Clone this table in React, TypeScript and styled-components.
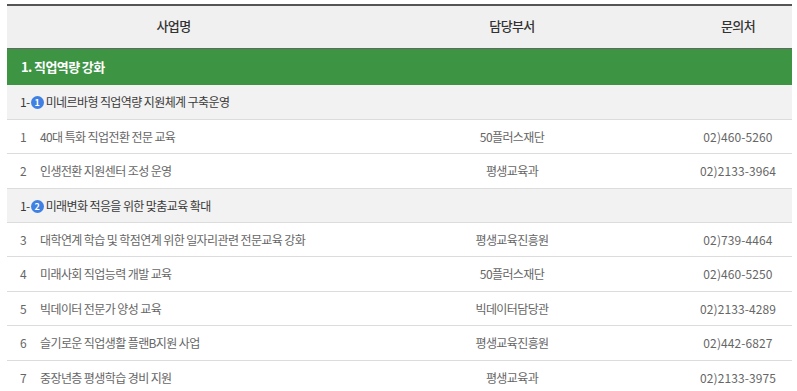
import React from "react";
import styled, { createGlobalStyle } from "styled-components";

const GlobalStyle = createGlobalStyle`
  html, body { margin: 0; padding: 0; background: #fff; }
  body { font-family: "Noto Sans CJK KR", "Noto Sans", sans-serif; }
`;

const Wrapper = styled.div`
  padding: 4px 5px 0 7px;
`;

const Table = styled.table`
  width: 785px;
  border-collapse: collapse;
  table-layout: fixed;
  border-top: 2px solid #555;
  font-family: "Noto Sans CJK KR", "Noto Sans", sans-serif;
  letter-spacing: -0.6px;
`;

const HeadRow = styled.tr`
  height: 43px;
  background: #f0f0f0;
  border-bottom: 1px solid #666;
`;

const Th = styled.th`
  font-size: 13px;
  font-weight: 500;
  color: #333;
  text-align: center;
  padding: 0 0 2px;
`;

const SectionRow = styled.tr`
  height: 37px;
  background: #3d9443;
`;

const SectionCell = styled.td`
  padding: 0 0 0 14px;
  font-size: 13px;
  font-weight: 700;
  color: #fff;
`;

const SubRow = styled.tr`
  height: 34px;
  background: #f2f2f2;
  border-bottom: 1px solid #dcdcdc;
`;

const SubCell = styled.td`
  padding: 0 0 0 13px;
  font-size: 12px;
  color: #3a3a3a;
  white-space: nowrap;
`;

const Badge = styled.span`
  display: inline-block;
  width: 13px;
  height: 13px;
  margin: 0 2px 0 1px;
  border-radius: 50%;
  background: #3f80e3;
  color: #fff;
  font-size: 9px;
  font-weight: 700;
  line-height: 13px;
  text-align: center;
  letter-spacing: 0;
  vertical-align: 1px;
`;

const DataRow = styled.tr<{ $last?: boolean }>`
  height: 34.5px;
  border-bottom: ${(p) => (p.$last ? "none" : "1px solid #dcdcdc")};
`;

const Td = styled.td<{ $align?: "left" | "center"; $numeric?: boolean }>`
  padding: 0;
  font-size: 12px;
  color: #666;
  text-align: ${(p) => p.$align ?? "center"};
  letter-spacing: ${(p) => (p.$numeric ? "0.1px" : "inherit")};
  white-space: nowrap;
`;

const Num = styled.span`
  display: inline-block;
  width: 20px;
  padding-left: 13px;
  letter-spacing: 0;
`;

type Item = { no: number; name: string; dept: string; tel: string };
type Group = { badge: number; title: string; items: Item[] };

const groups: Group[] = [
  {
    badge: 1,
    title: "미네르바형 직업역량 지원체계 구축운영",
    items: [
      { no: 1, name: "40대 특화 직업전환 전문 교육", dept: "50플러스재단", tel: "02)460-5260" },
      { no: 2, name: "인생전환 지원센터 조성 운영", dept: "평생교육과", tel: "02)2133-3964" },
    ],
  },
  {
    badge: 2,
    title: "미래변화 적응을 위한 맞춤교육 확대",
    items: [
      { no: 3, name: "대학연계 학습 및 학점연계 위한 일자리관련 전문교육 강화", dept: "평생교육진흥원", tel: "02)739-4464" },
      { no: 4, name: "미래사회 직업능력 개발 교육", dept: "50플러스재단", tel: "02)460-5250" },
      { no: 5, name: "빅데이터 전문가 양성 교육", dept: "빅데이터담당관", tel: "02)2133-4289" },
      { no: 6, name: "슬기로운 직업생활 플랜B지원 사업", dept: "평생교육진흥원", tel: "02)442-6827" },
      { no: 7, name: "중장년층 평생학습 경비 지원", dept: "평생교육과", tel: "02)2133-3975" },
    ],
  },
];

export default function App() {
  return (
    <Wrapper>
      <GlobalStyle />
      <Table>
        <colgroup>
          <col style={{ width: 333 }} />
          <col style={{ width: 344 }} />
          <col style={{ width: 108 }} />
        </colgroup>
        <thead>
          <HeadRow>
            <Th>사업명</Th>
            <Th>담당부서</Th>
            <Th>문의처</Th>
          </HeadRow>
        </thead>
        <tbody>
          <SectionRow>
            <SectionCell colSpan={3}>1. 직업역량 강화</SectionCell>
          </SectionRow>
          {groups.map((g, gi) => (
            <React.Fragment key={g.badge}>
              <SubRow>
                <SubCell colSpan={3}>
                  1-<Badge>{g.badge}</Badge>
                  {g.title}
                </SubCell>
              </SubRow>
              {g.items.map((it, ii) => (
                <DataRow key={it.no} $last={gi === groups.length - 1 && ii === g.items.length - 1}>
                  <Td $align="left">
                    <Num>{it.no}</Num>
                    {it.name}
                  </Td>
                  <Td>{it.dept}</Td>
                  <Td $numeric>{it.tel}</Td>
                </DataRow>
              ))}
            </React.Fragment>
          ))}
        </tbody>
      </Table>
    </Wrapper>
  );
}
